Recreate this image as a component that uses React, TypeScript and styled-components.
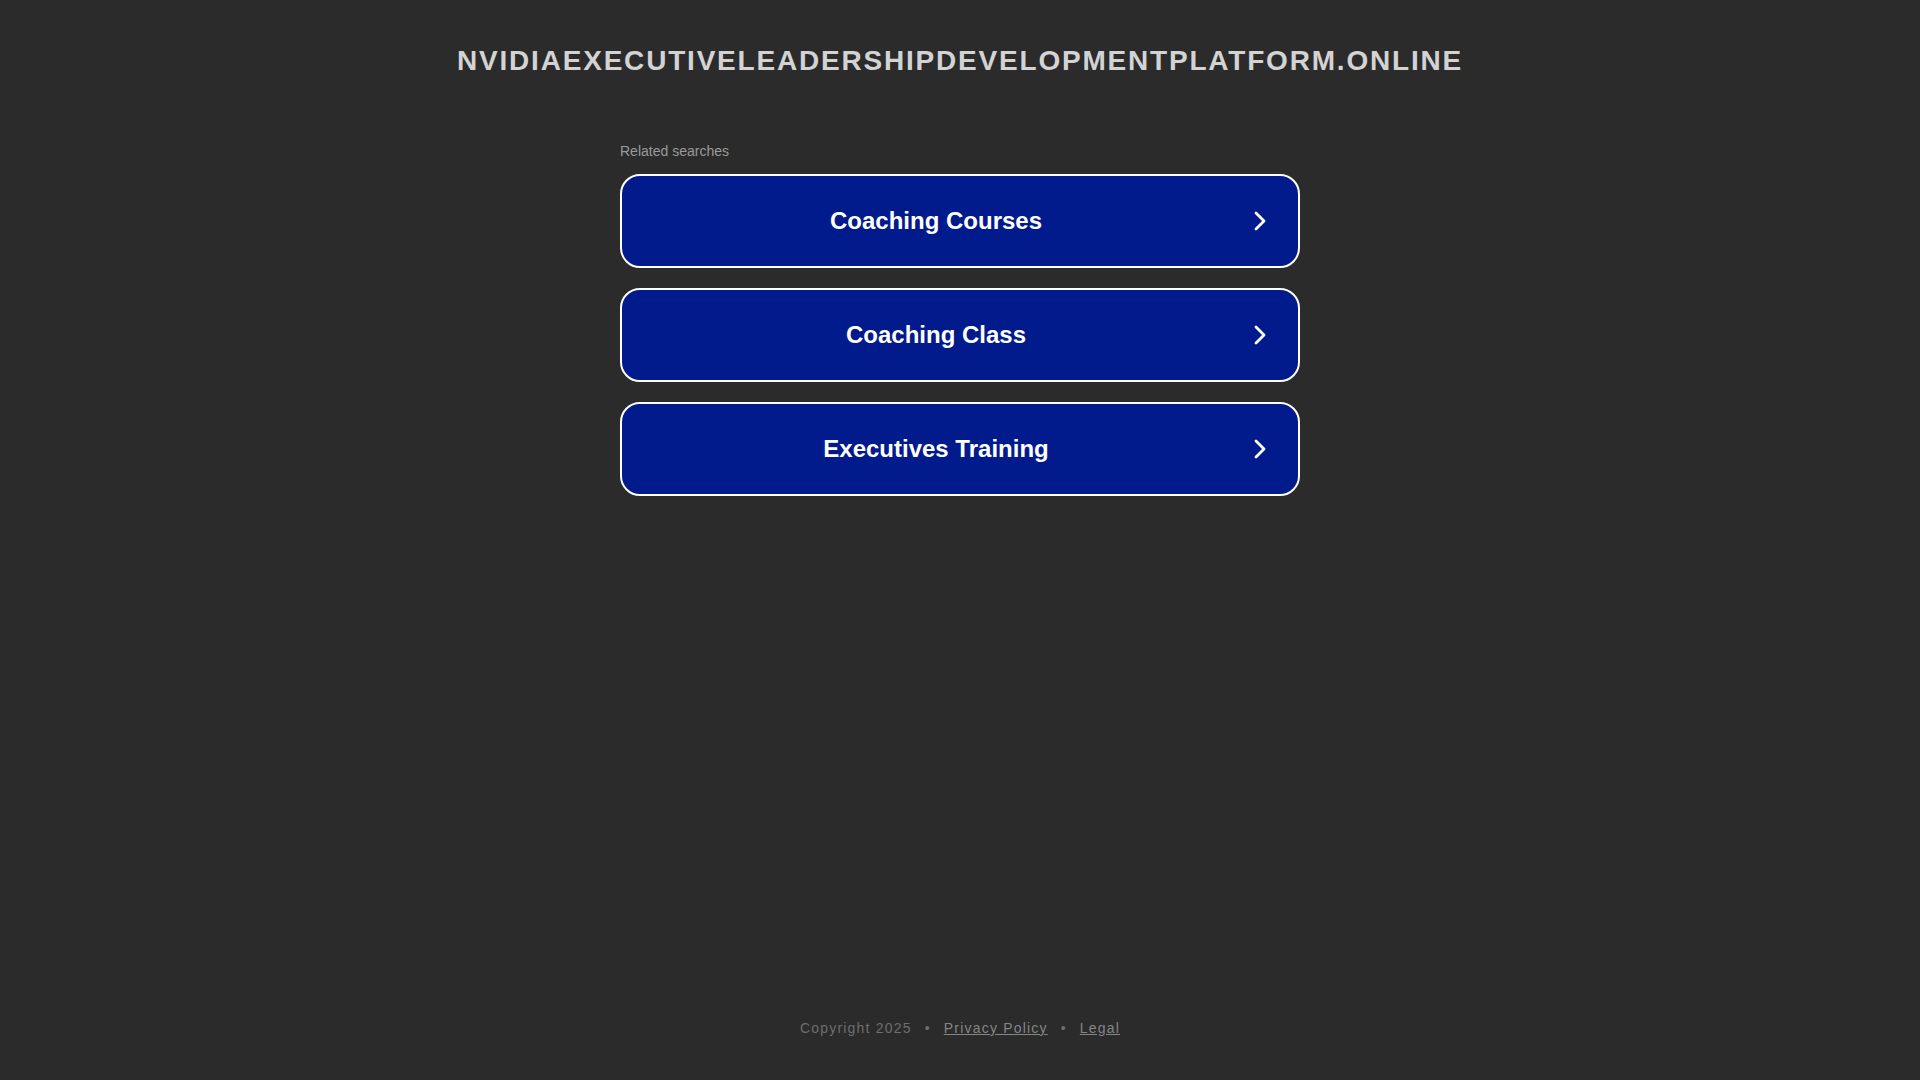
import styled, { createGlobalStyle } from 'styled-components'

const searches = ['Coaching Courses', 'Coaching Class', 'Executives Training']

const GlobalStyle = createGlobalStyle`
  html,
  body {
    margin: 0;
    padding: 0;
    background: #2b2b2b;
  }
  body {
    font-family: Arial, 'Liberation Sans', Helvetica, sans-serif;
  }
`

const Page = styled.div`
  min-height: 100vh;
  display: flex;
  flex-direction: column;
  align-items: center;
  box-sizing: border-box;
`

const DomainTitle = styled.h1`
  margin: 0;
  padding-top: 46px;
  font-size: 28px;
  line-height: 30px;
  font-weight: bold;
  letter-spacing: 1.8px;
  text-transform: uppercase;
  color: #d3d3d3;
  text-align: center;
`

const Searches = styled.section`
  width: 680px;
  margin-top: 67px;
  display: flex;
  flex-direction: column;
`

const SearchesLabel = styled.p`
  margin: 0 0 15px;
  font-size: 14px;
  line-height: 16px;
  color: #9a9a9a;
`

const SearchList = styled.ul`
  list-style: none;
  margin: 0;
  padding: 0;
  display: flex;
  flex-direction: column;
  gap: 20px;
`

const SearchLink = styled.a`
  height: 94px;
  box-sizing: border-box;
  display: flex;
  align-items: center;
  padding-right: 31px;
  background: #011a8c;
  border: 2px solid #ffffff;
  border-radius: 20px;
  color: #ffffff;
  text-decoration: none;
  cursor: pointer;

  span {
    flex: 1;
    padding-right: 3px;
    text-align: center;
    font-size: 24px;
    font-weight: bold;
  }

  svg {
    flex: none;
  }
`

const Footer = styled.footer`
  margin-top: auto;
  padding-bottom: 42px;
  font-size: 14px;
  line-height: 20px;
  letter-spacing: 1.2px;
  color: #6e6e6e;

  a {
    color: #858585;
    text-decoration: underline;
  }

  .dot {
    margin: 0 13px;
  }
`

const Chevron = () => (
  <svg width="14" height="20" viewBox="0 0 14 20">
    <path
      d="M3 2 L11 10 L3 18"
      fill="none"
      stroke="#ffffff"
      strokeWidth="2.8"
      strokeLinecap="round"
      strokeLinejoin="round"
    />
  </svg>
)

const App = () => {
  return (
    <>
      <GlobalStyle />
      <Page>
        <DomainTitle>nvidiaexecutiveleadershipdevelopmentplatform.online</DomainTitle>

        <Searches>
          <SearchesLabel>Related searches</SearchesLabel>
          <SearchList>
            {searches.map((term) => (
              <li key={term}>
                <SearchLink>
                  <span>{term}</span>
                  <Chevron />
                </SearchLink>
              </li>
            ))}
          </SearchList>
        </Searches>

        <Footer>
          Copyright 2025<span className="dot">•</span>
          <a>Privacy Policy</a>
          <span className="dot">•</span>
          <a>Legal</a>
        </Footer>
      </Page>
    </>
  )
}

export default App
